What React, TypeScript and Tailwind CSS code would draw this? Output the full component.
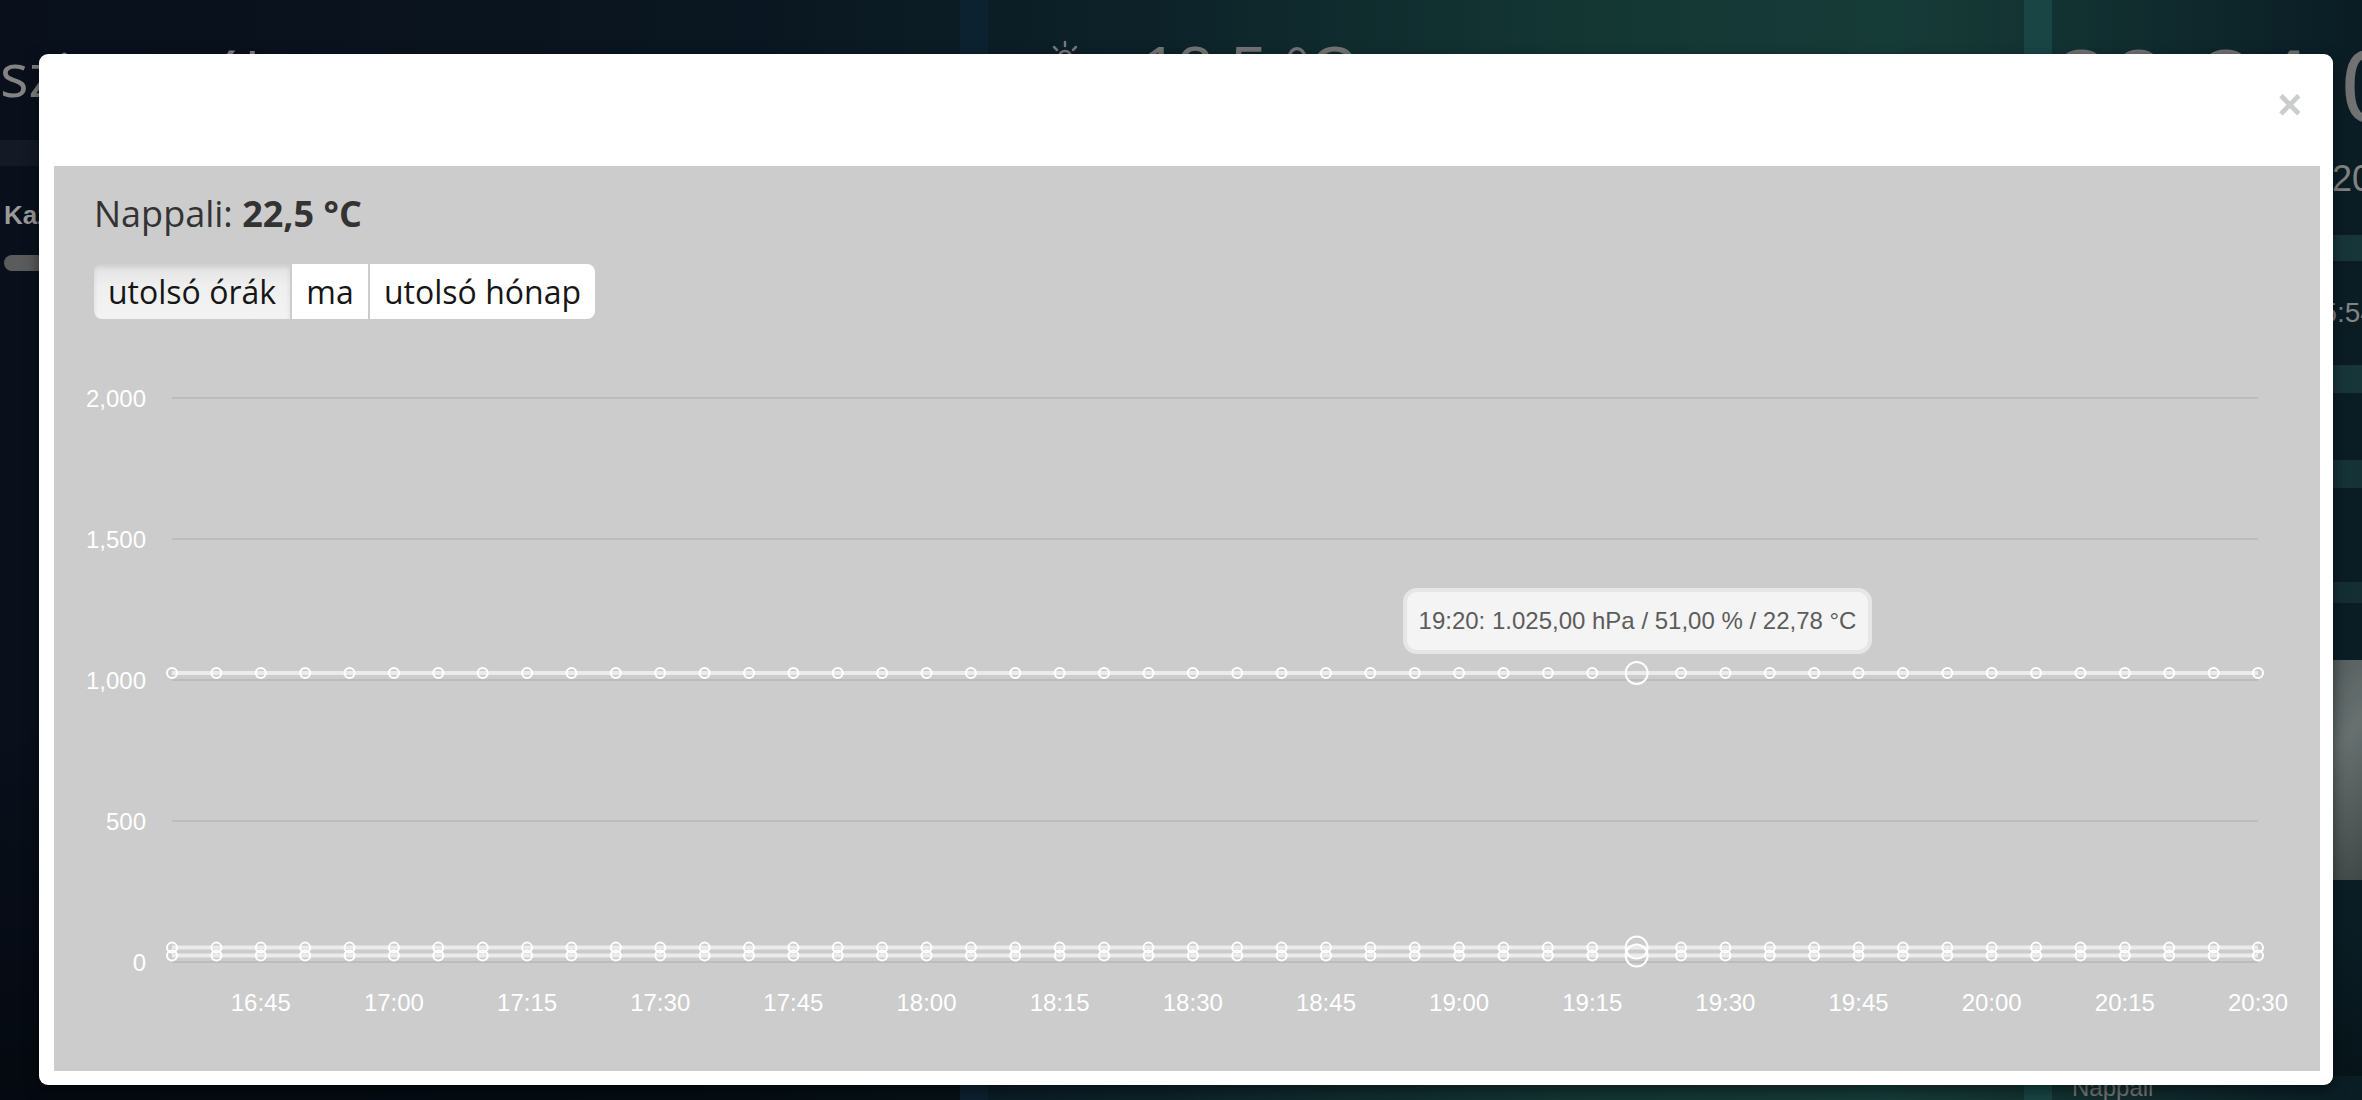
import React from 'react';

const STEP = 2086 / 47;
const xs = Array.from({ length: 48 }, (_, i) => 118 + i * STEP);

// y position inside the svg for a value (0 -> 622, 500 units -> 141px)
const yOf = (v: number) => 622 - (v * 141) / 500;

const series = [1025, 51, 22.78];
const gridValues = [2000, 1500, 1000, 500, 0];
const timeLabels = [
  '16:45', '17:00', '17:15', '17:30', '17:45', '18:00', '18:15', '18:30',
  '18:45', '19:00', '19:15', '19:30', '19:45', '20:00', '20:15', '20:30',
];
const ACTIVE = 33;

function Chart() {
  return (
    <div className="relative h-[731px] w-[2266px]">
      <svg width="2266" height="731" className="block" style={{ fontFamily: '"Liberation Sans", Arial, sans-serif' }}>
        {gridValues.map((v) => (
          <g key={v}>
            <line x1={118} x2={2204} y1={yOf(v)} y2={yOf(v)} stroke="#bcbcbc" strokeWidth={2} />
            <text x={92} y={yOf(v) + 9} textAnchor="end" fontSize={24} fill="#ffffff">
              {v.toLocaleString('en-US')}
            </text>
          </g>
        ))}
        {timeLabels.map((t, k) => (
          <text key={t} x={xs[2 + k * 3]} y={671} textAnchor="middle" fontSize={24} fill="#ffffff">
            {t}
          </text>
        ))}
        {series.map((v) => (
          <g key={v}>
            <line x1={118} x2={2204} y1={yOf(v)} y2={yOf(v)} stroke="rgba(255,255,255,0.6)" strokeWidth={4} />
            {xs.map((x, i) => (
              <circle
                key={i}
                cx={x}
                cy={yOf(v)}
                r={i === ACTIVE ? 11 : 5}
                fill="none"
                stroke="#ffffff"
                strokeWidth={2}
              />
            ))}
          </g>
        ))}
      </svg>
      <div className="absolute left-[1349px] top-[248px] flex h-[66px] w-[469px] items-center justify-center rounded-[14px] border-[4px] border-[#e6e6e6] bg-[#f4f4f4] font-['Liberation_Sans',Arial,sans-serif] text-[24px] text-[#5c5c5c]">
        19:20: 1.025,00 hPa / 51,00 % / 22,78 °C
      </div>
    </div>
  );
}

function SunIcon() {
  return (
    <svg width="34" height="34" viewBox="0 0 34 34" fill="none" stroke="#8d8d8d" strokeWidth="2.5" strokeLinecap="round">
      <circle cx="17" cy="19" r="6" />
      <line x1="17" y1="4" x2="17" y2="8" />
      <line x1="6" y1="9" x2="9" y2="12" />
      <line x1="28" y1="9" x2="25" y2="12" />
      <line x1="2" y1="19" x2="6" y2="19" />
      <line x1="28" y1="19" x2="32" y2="19" />
    </svg>
  );
}

function Background() {
  return (
    <div className="flex h-full w-full bg-[linear-gradient(90deg,#0b1321_0%,#0c1a26_30%,#0f2830_48%,#17403d_66%,#1b4742_80%,#163a3a_88%,#0c222b_100%)]">
      {/* left column */}
      <div className="flex w-[960px] flex-col">
        <div className="h-[140px] pt-[44px] font-['Open_Sans',sans-serif] text-[60px] leading-none text-[#9a9a9a]">
          szivattyúk
        </div>
        <div className="h-[26px] bg-[rgba(255,255,255,0.05)]" />
        <div className="mt-[30px] pl-[4px] font-['Liberation_Sans',Arial,sans-serif] text-[26px] font-bold text-[#b5b5b5]">
          Kazán
        </div>
        <div className="ml-[4px] mt-[20px] h-[16px] w-[200px] rounded-full bg-[#6c6c6c]" />
        <div className="mt-auto h-[400px] bg-[linear-gradient(180deg,transparent,rgba(0,0,0,0.4))]" />
      </div>
      <div className="w-[28px] bg-[#10293a]" />
      {/* middle column */}
      <div className="flex flex-1 flex-col">
        <div className="flex items-start gap-[60px] pl-[60px] pt-[38px]">
          <SunIcon />
          <span className="font-['Liberation_Sans',Arial,sans-serif] text-[64px] leading-none text-[#8a8a8a]">18,5 °C</span>
        </div>
      </div>
      <div className="w-[28px] bg-[#1e5350]" />
      {/* right column */}
      <div className="flex w-[310px] flex-col overflow-hidden">
        <div className="-mr-[40px] mt-[34px] h-[104px] text-right font-['Liberation_Sans',Arial,sans-serif] text-[104px] leading-none text-[#868686]">
          20:24:07
        </div>
        <div className="mt-[23px] flex h-[36px] justify-end">
          <span className="-mr-[10px] font-['Liberation_Sans',Arial,sans-serif] text-[36px] leading-none text-[#9a9a9a]">
            2017. 20
          </span>
        </div>
        <div className="mt-[38px] h-[26px] bg-[rgba(60,120,115,0.35)]" />
        <div className="mt-[38px] flex h-[28px] justify-end">
          <span className="-mr-[14px] font-['Liberation_Sans',Arial,sans-serif] text-[28px] leading-none text-[#9a9a9a]">
            05:54
          </span>
        </div>
        <div className="mt-[38px] h-[28px] bg-[rgba(60,120,115,0.35)]" />
        <div className="mt-[67px] h-[28px] bg-[rgba(60,120,115,0.3)]" />
        <div className="mt-[94px] h-[21px] bg-[rgba(60,120,115,0.25)]" />
        <div className="mt-[57px] h-[220px] bg-[linear-gradient(135deg,#8a9292,#5d6767_45%,#7a8484_70%,#4c5555)]" />
        <div className="mt-auto h-[150px] bg-[linear-gradient(180deg,transparent,rgba(0,0,0,0.3))]" />
        <div className="pl-[20px] font-['Liberation_Sans',Arial,sans-serif] text-[24px] leading-none text-[#8d8d8d]">
          Nappali
        </div>
      </div>
    </div>
  );
}

export default function App() {
  return (
    <div className="relative h-[1100px] w-[2362px] overflow-hidden">
      <Background />

      {/* modal */}
      <div className="absolute inset-0 bg-[rgba(0,0,0,0.15)]">
        <div className="ml-[39px] mt-[54px] flex h-[1031px] w-[2294px] flex-col rounded-[9px] bg-white shadow-[0_5px_15px_rgba(0,0,0,0.5)]">
          <div className="flex h-[112px] justify-end pr-[31px] pt-[30px]">
            <button className="h-[40px] font-['Liberation_Sans',Arial,sans-serif] text-[42px] font-bold leading-none text-[#cccccc]">
              ×
            </button>
          </div>
          <div className="mb-[14px] ml-[15px] mr-[13px] flex flex-1 flex-col bg-[#cccccc]">
            <div className="px-[40px] pt-[23px]">
              <h4 className="h-[50px] font-['Open_Sans',sans-serif] text-[36px] leading-[50px] text-[#333333]">
                Nappali: <b className="font-bold">22,5 °C</b>
              </h4>
              <div className="mt-[25px] flex h-[55px] w-fit gap-[2px] overflow-hidden rounded-[8px] font-['Open_Sans',sans-serif] text-[32px] text-[#161616]">
                <button className="w-[196px] bg-[linear-gradient(180deg,#e2e2e2,#efefef_40%,#f3f3f3)] shadow-[inset_0_3px_5px_rgba(0,0,0,0.1)]">
                  utolsó órák
                </button>
                <button className="w-[76px] bg-white">ma</button>
                <button className="w-[225px] bg-white">utolsó hónap</button>
              </div>
            </div>
            <div className="mt-[21px]">
              <Chart />
            </div>
          </div>
        </div>
      </div>
    </div>
  );
}
